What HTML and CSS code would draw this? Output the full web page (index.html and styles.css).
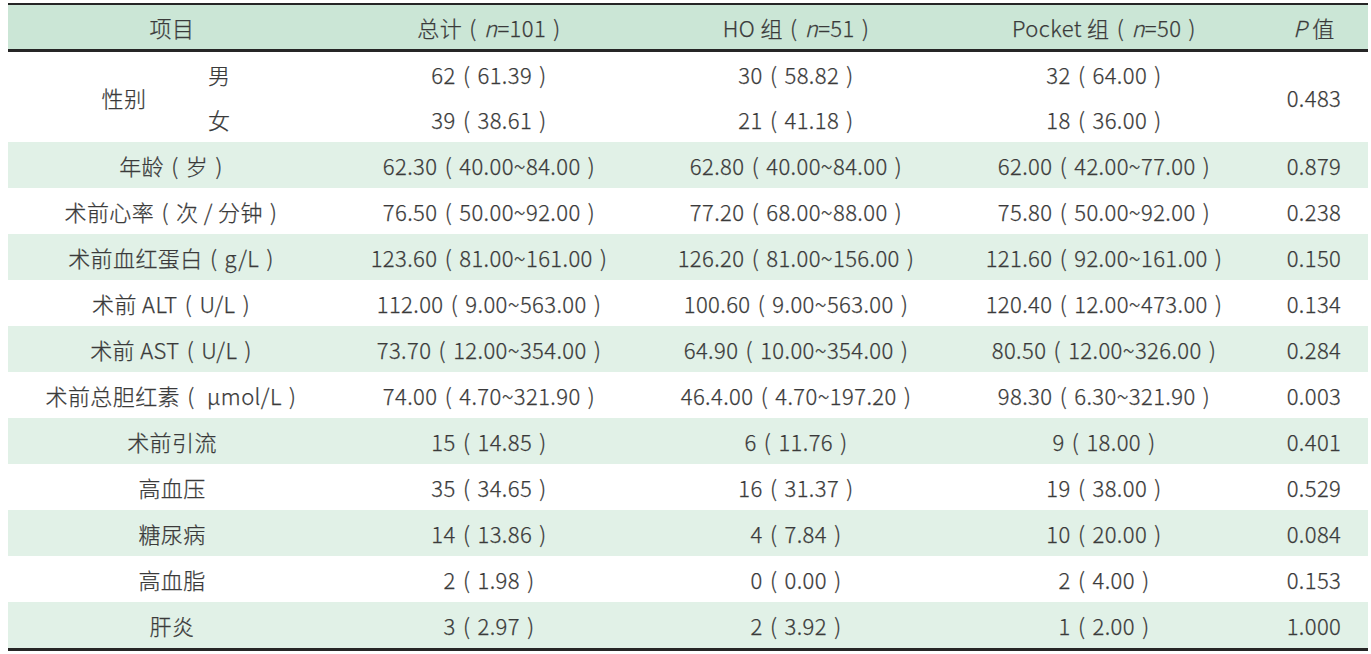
FILE: index.html
```html
<!DOCTYPE html>
<html lang="zh">
<head>
<meta charset="utf-8">
<title>基线资料</title>
<link rel="stylesheet" href="styles.css">
</head>
<body>
<table class="data">
  <colgroup>
    <col class="c-a"><col class="c-b"><col class="c-tot"><col class="c-ho"><col class="c-pk"><col class="c-p">
  </colgroup>
  <thead>
    <tr>
      <th colspan="2">项目</th>
      <th>总计 <span class="pa">(</span> <i>n</i>=101 <span class="pa">)</span></th>
      <th>HO 组 <span class="pa">(</span> <i>n</i>=51 <span class="pa">)</span></th>
      <th>Pocket 组 <span class="pa">(</span> <i>n</i>=50 <span class="pa">)</span></th>
      <th><i>P</i> 值</th>
    </tr>
  </thead>
  <tbody>
    <tr class="half">
      <td rowspan="2" class="sex">性别</td>
      <td class="sub">男</td>
      <td>62 <span class="pa">(</span> 61.39 <span class="pa">)</span></td>
      <td>30 <span class="pa">(</span> 58.82 <span class="pa">)</span></td>
      <td>32 <span class="pa">(</span> 64.00 <span class="pa">)</span></td>
      <td rowspan="2">0.483</td>
    </tr>
    <tr class="half">
      <td class="sub">女</td>
      <td>39 <span class="pa">(</span> 38.61 <span class="pa">)</span></td>
      <td>21 <span class="pa">(</span> 41.18 <span class="pa">)</span></td>
      <td>18 <span class="pa">(</span> 36.00 <span class="pa">)</span></td>
    </tr>
    <tr class="alt"><td colspan="2">年龄 <span class="pa">(</span> 岁 <span class="pa">)</span></td><td>62.30 <span class="pa">(</span> 40.00~84.00 <span class="pa">)</span></td><td>62.80 <span class="pa">(</span> 40.00~84.00 <span class="pa">)</span></td><td>62.00 <span class="pa">(</span> 42.00~77.00 <span class="pa">)</span></td><td>0.879</td></tr>
    <tr><td colspan="2">术前心率 <span class="pa">(</span> 次 / 分钟 <span class="pa">)</span></td><td>76.50 <span class="pa">(</span> 50.00~92.00 <span class="pa">)</span></td><td>77.20 <span class="pa">(</span> 68.00~88.00 <span class="pa">)</span></td><td>75.80 <span class="pa">(</span> 50.00~92.00 <span class="pa">)</span></td><td>0.238</td></tr>
    <tr class="alt"><td colspan="2">术前血红蛋白 <span class="pa">(</span> g/L <span class="pa">)</span></td><td>123.60 <span class="pa">(</span> 81.00~161.00 <span class="pa">)</span></td><td>126.20 <span class="pa">(</span> 81.00~156.00 <span class="pa">)</span></td><td>121.60 <span class="pa">(</span> 92.00~161.00 <span class="pa">)</span></td><td>0.150</td></tr>
    <tr><td colspan="2">术前 ALT <span class="pa">(</span> U/L <span class="pa">)</span></td><td>112.00 <span class="pa">(</span> 9.00~563.00 <span class="pa">)</span></td><td>100.60 <span class="pa">(</span> 9.00~563.00 <span class="pa">)</span></td><td>120.40 <span class="pa">(</span> 12.00~473.00 <span class="pa">)</span></td><td>0.134</td></tr>
    <tr class="alt"><td colspan="2">术前 AST <span class="pa">(</span> U/L <span class="pa">)</span></td><td>73.70 <span class="pa">(</span> 12.00~354.00 <span class="pa">)</span></td><td>64.90 <span class="pa">(</span> 10.00~354.00 <span class="pa">)</span></td><td>80.50 <span class="pa">(</span> 12.00~326.00 <span class="pa">)</span></td><td>0.284</td></tr>
    <tr><td colspan="2">术前总胆红素 <span class="pa">(</span>  μmol/L <span class="pa">)</span></td><td>74.00 <span class="pa">(</span> 4.70~321.90 <span class="pa">)</span></td><td>46.4.00 <span class="pa">(</span> 4.70~197.20 <span class="pa">)</span></td><td>98.30 <span class="pa">(</span> 6.30~321.90 <span class="pa">)</span></td><td>0.003</td></tr>
    <tr class="alt"><td colspan="2">术前引流</td><td>15 <span class="pa">(</span> 14.85 <span class="pa">)</span></td><td>6 <span class="pa">(</span> 11.76 <span class="pa">)</span></td><td>9 <span class="pa">(</span> 18.00 <span class="pa">)</span></td><td>0.401</td></tr>
    <tr><td colspan="2">高血压</td><td>35 <span class="pa">(</span> 34.65 <span class="pa">)</span></td><td>16 <span class="pa">(</span> 31.37 <span class="pa">)</span></td><td>19 <span class="pa">(</span> 38.00 <span class="pa">)</span></td><td>0.529</td></tr>
    <tr class="alt"><td colspan="2">糖尿病</td><td>14 <span class="pa">(</span> 13.86 <span class="pa">)</span></td><td>4 <span class="pa">(</span> 7.84 <span class="pa">)</span></td><td>10 <span class="pa">(</span> 20.00 <span class="pa">)</span></td><td>0.084</td></tr>
    <tr><td colspan="2">高血脂</td><td>2 <span class="pa">(</span> 1.98 <span class="pa">)</span></td><td>0 <span class="pa">(</span> 0.00 <span class="pa">)</span></td><td>2 <span class="pa">(</span> 4.00 <span class="pa">)</span></td><td>0.153</td></tr>
    <tr class="alt"><td colspan="2">肝炎</td><td>3 <span class="pa">(</span> 2.97 <span class="pa">)</span></td><td>2 <span class="pa">(</span> 3.92 <span class="pa">)</span></td><td>1 <span class="pa">(</span> 2.00 <span class="pa">)</span></td><td>1.000</td></tr>
  </tbody>
</table>
</body>
</html>
```

FILE: styles.css
```css
html, body {
  margin: 0;
  padding: 0;
  background: #ffffff;
}
body {
  padding: 3px 3px 0 8px;
  font-family: "Noto Sans CJK SC", "Noto Sans", sans-serif;
  color: #3a3a3a;
}
.data {
  width: 1360px;
  border-collapse: collapse;
  table-layout: fixed;
  border-top: 2px solid #262626;
  border-bottom: 3px solid #262626;
  font-size: 22px;
  letter-spacing: 0.4px;
}
.c-a { width: 196px; }
.c-b { width: 132px; }
.c-tot { width: 308px; }
.c-ho { width: 306px; }
.c-pk { width: 310px; }
.c-p { width: 108px; }
.data th, .data td {
  padding: 0 0 1px 0;
  text-align: center;
  font-weight: 300;
  white-space: pre;
  line-height: 24px;
  -webkit-text-stroke: 0.25px #3a3a3a;
}
.data thead th {
  background: #cbe6d6;
  height: 43px;
  border-bottom: 3px solid #262626;
}
.data tbody td {
  height: 45px;
}
.data tbody tr.half td {
  height: 44px;
}
.data tr.alt td {
  background: #e1f1e7;
}
.data td.sex {
  padding-left: 36px;
}
.data td.sub {
  text-align: left;
  padding-left: 4px;
}
.data i {
  font-style: italic;
}
.data .pa {
  padding: 0 2px;
}
```
